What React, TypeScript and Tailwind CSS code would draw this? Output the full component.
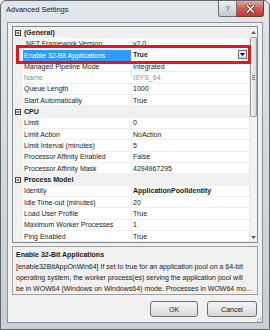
import React from "react";

type Row =
  | { kind: "cat"; label: string }
  | { kind: "prop"; name: string; value: string; bold?: boolean; muted?: boolean; selected?: boolean };

const ROWS: Row[] = [
  { kind: "cat", label: "(General)" },
  { kind: "prop", name: ".NET Framework Version", value: "v2.0" },
  { kind: "prop", name: "Enable 32-Bit Applications", value: "True", bold: true, selected: true },
  { kind: "prop", name: "Managed Pipeline Mode", value: "Integrated" },
  { kind: "prop", name: "Name", value: "ISYS_64", muted: true },
  { kind: "prop", name: "Queue Length", value: "1000" },
  { kind: "prop", name: "Start Automatically", value: "True" },
  { kind: "cat", label: "CPU" },
  { kind: "prop", name: "Limit", value: "0" },
  { kind: "prop", name: "Limit Action", value: "NoAction" },
  { kind: "prop", name: "Limit Interval (minutes)", value: "5" },
  { kind: "prop", name: "Processor Affinity Enabled", value: "False" },
  { kind: "prop", name: "Processor Affinity Mask", value: "4294967295" },
  { kind: "cat", label: "Process Model" },
  { kind: "prop", name: "Identity", value: "ApplicationPoolIdentity", bold: true },
  { kind: "prop", name: "Idle Time-out (minutes)", value: "20" },
  { kind: "prop", name: "Load User Profile", value: "True" },
  { kind: "prop", name: "Maximum Worker Processes", value: "1" },
  { kind: "prop", name: "Ping Enabled", value: "True" },
];

function Expander() {
  return (
    <svg width="6" height="6" viewBox="0 0 6 6" className="block">
      <rect x="0.5" y="0.5" width="5" height="5" fill="#fff" stroke="#404040" strokeWidth="1" />
      <line x1="1.5" y1="3" x2="4.5" y2="3" stroke="#000" strokeWidth="1" />
    </svg>
  );
}

function GridRow({ row }: { row: Row }) {
  if (row.kind === "cat") {
    return (
      <div className="flex h-[11.33px] items-center bg-[#f0f0f0]">
        <div className="w-[10px] flex items-center justify-center pl-[0px]">
          <Expander />
        </div>
        <span className="pl-[1px] font-bold text-[#1a1a1a] leading-none">{row.label}</span>
      </div>
    );
  }
  return (
    <div className="flex h-[11.33px]">
      <div className="w-[10px] shrink-0 bg-[#f0f0f0]" />
      <div
        className={
          row.selected
            ? "w-[108px] shrink-0 flex items-center pl-[1px] bg-[#3399ff] text-white"
            : "w-[108px] shrink-0 flex items-center pl-[1px] border-b border-[#f0f0f0] " +
              (row.muted ? "text-[#8d8d8d]" : "text-[#1a1a1a]")
        }
      >
        <span className="leading-none whitespace-nowrap">{row.name}</span>
      </div>
      <div className="w-[1px] shrink-0 bg-[#f0f0f0]" />
      <div
        className={
          "flex-1 min-w-0 flex items-center pl-[1px] border-b border-[#f0f0f0] " +
          (row.muted ? "text-[#8d8d8d]" : "text-[#1a1a1a]") +
          (row.bold ? " font-bold" : "")
        }
      >
        <span className="leading-none whitespace-nowrap flex-1">{row.value}</span>
        {row.selected && (
          <div className="w-[9px] h-[9px] mr-[2px] border border-[#707070] bg-gradient-to-b from-[#f4f4f4] to-[#dcdcdc] flex items-center justify-center">
            <svg width="5" height="3" viewBox="0 0 5 3">
              <path d="M0 0 H5 L2.5 3 Z" fill="#000" />
            </svg>
          </div>
        )}
      </div>
    </div>
  );
}

function Scrollbar() {
  return (
    <div className="w-[8px] shrink-0 bg-[#f2f2f2] border-l border-[#e6e6e6] flex flex-col items-center">
      <div className="h-[10px] flex items-center justify-center">
        <svg width="5" height="3" viewBox="0 0 5 3">
          <path d="M0 3 H5 L2.5 0 Z" fill="#606060" />
        </svg>
      </div>
      <div className="w-[7px] h-[80px] rounded-[2px] border border-[#9a9a9a] bg-gradient-to-r from-[#f3f3f3] to-[#dadada] flex flex-col items-center justify-center gap-[1px]">
        <div className="w-[3px] h-[1px] bg-[#7a7a7a]" />
        <div className="w-[3px] h-[1px] bg-[#7a7a7a]" />
        <div className="w-[3px] h-[1px] bg-[#7a7a7a]" />
      </div>
      <div className="flex-1" />
      <div className="h-[10px] flex items-center justify-center">
        <svg width="5" height="3" viewBox="0 0 5 3">
          <path d="M0 0 H5 L2.5 3 Z" fill="#606060" />
        </svg>
      </div>
    </div>
  );
}

export default function App() {
  return (
    <div className="w-[270px] h-[330px] flex flex-col rounded-t-[6px] border border-[#62676e] bg-gradient-to-b from-[#e2e6ea] via-[#d3d8dd] to-[#c9ced4] font-['Liberation_Sans',Arial,sans-serif] text-[7px] overflow-hidden">
      {/* Title bar */}
      <div className="h-[21px] shrink-0 flex items-start justify-between">
        <span className="pl-[5px] pt-[5px] text-[7.5px] text-[#202020] leading-none">Advanced Settings</span>
        <div className="flex mr-[5px]">
          <div className="w-[19px] h-[16px] rounded-bl-[3px] border border-t-0 border-[#6a6f77] bg-gradient-to-b from-[#eef0f3] to-[#c5cad1] flex items-center justify-center text-[8px] text-[#404a56] leading-none">
            ?
          </div>
          <div className="w-[27px] h-[16px] rounded-br-[3px] border border-t-0 border-l-0 border-[#6a3a36] bg-gradient-to-b from-[#e5a79c] via-[#cf5a4c] to-[#c33b2c] flex items-center justify-center">
            <svg width="9" height="8" viewBox="0 0 9 8">
              <path d="M1.5 1 L7.5 7 M7.5 1 L1.5 7" stroke="#4b2b2b" strokeWidth="3" strokeLinecap="square" />
              <path d="M1.5 1 L7.5 7 M7.5 1 L1.5 7" stroke="#fff" strokeWidth="1.6" strokeLinecap="square" />
            </svg>
          </div>
        </div>
      </div>

      {/* Client area */}
      <div className="flex-1 mx-[6px] mb-[6px] border border-[#8c9198] bg-[#f0f0f0] flex flex-col px-[4px] pt-[3px] relative">
        {/* Property grid */}
        <div className="relative h-[217.3px] shrink-0 border border-[#828790] bg-white flex">
          <div className="flex-1 min-w-0 flex flex-col">
            {ROWS.map((r, i) => (
              <GridRow key={i} row={r} />
            ))}
          </div>
          <Scrollbar />
          {/* red annotation box */}
          <div className="absolute left-[3px] top-[18px] w-[235px] h-[19px] border-[3px] border-[#e3161b] pointer-events-none" />
        </div>

        {/* Description pane */}
        <div className="mt-[3px] h-[49px] shrink-0 border border-[#a0a0a0] px-[3px] pt-[2px] text-[#1a1a1a] leading-[11.3px] whitespace-nowrap">
          <div className="font-bold">Enable 32-Bit Applications</div>
          <div>[enable32BitAppOnWin64] If set to true for an application pool on a 64-bit</div>
          <div>operating system, the worker process(es) serving the application pool will</div>
          <div>be in WOW64 (Windows on Windows64) mode. Processes in WOW64 mo...</div>
        </div>

        {/* Buttons */}
        <div className="mt-[6px] flex justify-end gap-[9px] pr-[1px]">
          <button className="w-[48px] h-[16px] rounded-[3px] border border-[#707070] bg-gradient-to-b from-[#f6f6f6] via-[#e8e8e8] to-[#d6d6d6] text-[7px] text-[#1a1a1a] leading-none">
            OK
          </button>
          <button className="w-[50px] h-[16px] rounded-[3px] border border-[#707070] bg-gradient-to-b from-[#f6f6f6] via-[#e8e8e8] to-[#d6d6d6] text-[7px] text-[#1a1a1a] leading-none">
            Cancel
          </button>
        </div>

        {/* size grip */}
        <svg width="5" height="5" viewBox="0 0 5 5" className="absolute right-[0px] bottom-[0px]">
          <rect x="3" y="0" width="1" height="1" fill="#a0a0a0" />
          <rect x="1" y="2" width="1" height="1" fill="#a0a0a0" />
          <rect x="3" y="2" width="1" height="1" fill="#a0a0a0" />
          <rect x="0" y="4" width="1" height="1" fill="#a0a0a0" />
          <rect x="2" y="4" width="1" height="1" fill="#a0a0a0" />
          <rect x="4" y="4" width="1" height="1" fill="#a0a0a0" />
        </svg>
      </div>
    </div>
  );
}
